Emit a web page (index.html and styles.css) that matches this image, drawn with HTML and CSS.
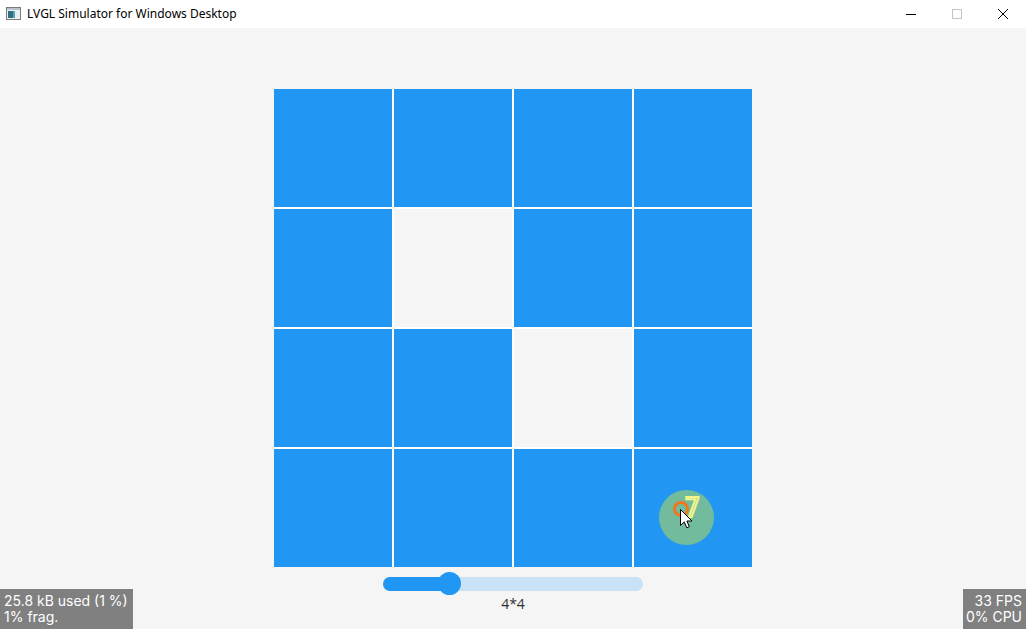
FILE: index.html
```html
<!DOCTYPE html>
<html>
<head>
<meta charset="utf-8">
<link rel="stylesheet" href="styles.css">
</head>
<body>
<div class="window">
  <div class="titlebar">
    <svg class="app-icon" width="15" height="13" viewBox="0 0 15 13">
      <rect x="0.5" y="0.5" width="14" height="12" fill="#f0f0f0" stroke="#7a7a7a"/>
      <rect x="1" y="1" width="13" height="2" fill="#b8c4cc"/>
      <rect x="2" y="4" width="5" height="7" fill="#2e6f86"/>
      <rect x="7" y="4" width="2" height="7" fill="#5aa0a8"/>
      <rect x="9" y="4" width="4" height="7" fill="#e6eef2"/>
    </svg>
    <span class="title">LVGL Simulator for Windows Desktop</span>
    <div class="controls">
      <div class="ctl">
        <svg width="12" height="12" viewBox="0 0 12 12"><path d="M1 6.5H11" stroke="#000" stroke-width="1"/></svg>
      </div>
      <div class="ctl">
        <svg width="12" height="12" viewBox="0 0 12 12"><rect x="1.5" y="1.5" width="9" height="9" fill="none" stroke="#c4c4c4"/></svg>
      </div>
      <div class="ctl">
        <svg width="12" height="12" viewBox="0 0 12 12"><path d="M1 1L11 11M11 1L1 11" stroke="#000" stroke-width="1"/></svg>
      </div>
    </div>
  </div>
  <div class="screen">
    <div class="grid">
      <div class="cell on"></div><div class="cell on"></div><div class="cell on"></div><div class="cell on"></div>
      <div class="cell on"></div><div class="cell"></div><div class="cell on"></div><div class="cell on"></div>
      <div class="cell on"></div><div class="cell on"></div><div class="cell"></div><div class="cell on"></div>
      <div class="cell on"></div><div class="cell on"></div><div class="cell on"></div><div class="cell on"></div>
    </div>
    <div class="slider">
      <div class="track"><div class="indicator" style="width:66px"></div><div class="knob" style="left:55px"></div></div>
    </div>
    <div class="size-label">4*4</div>
    <div class="stat stat-left">25.8 kB used (1 %)<br>1% frag.</div>
    <div class="stat stat-right">33 FPS<br>0% CPU</div>
    <div class="touch">
      <div class="touch-circle"></div>
      <div class="touch-ring"></div>
      <div class="touch-num">7</div>
      <svg class="cursor" width="13" height="20" viewBox="0 0 13 20">
        <path d="M0.5 0.5V16.5L4.3 12.9L6.8 18.8L9.3 17.7L6.9 12H12L0.5 0.5Z" fill="#fff" stroke="#000" stroke-width="1" stroke-linejoin="round"/>
      </svg>
    </div>
  </div>
</div>
</body>
</html>
```
FILE: styles.css
```css
html, body {
  margin: 0;
  padding: 0;
  width: 1026px;
  height: 629px;
  overflow: hidden;
}
.window {
  width: 1026px;
  height: 629px;
  display: flex;
  flex-direction: column;
  background: #fff;
}
.titlebar {
  height: 28px;
  flex: none;
  display: flex;
  align-items: center;
  background: #fff;
  font-family: "Noto Sans", "Liberation Sans", sans-serif;
  font-size: 12px;
  color: #000;
}
.app-icon {
  margin-left: 6px;
  margin-top: -1px;
}
.title {
  margin-left: 6px;
  margin-top: -1px;
}
.controls {
  margin-left: auto;
  display: flex;
  height: 28px;
}
.ctl {
  width: 46px;
  display: flex;
  align-items: center;
  justify-content: center;
  margin-top: -1px;
}
.screen {
  position: relative;
  flex: 1;
  background: #f5f5f5;
  display: flex;
  flex-direction: column;
  align-items: center;
  padding-top: 61px;
  font-family: "Inter", "Open Sans", sans-serif;
}
.grid {
  width: 478px;
  height: 478px;
  display: grid;
  grid-template-columns: repeat(4, 118px);
  grid-template-rows: repeat(4, 118px);
  gap: 2px;
  background: #fff;
}
.cell {
  background: #f5f5f5;
}
.cell.on {
  background: #2196f3;
}
.slider {
  margin-top: 10px;
  width: 260px;
  height: 14px;
}
.track {
  position: relative;
  width: 260px;
  height: 14px;
  border-radius: 7px;
  background: #c9e2f6;
}
.indicator {
  height: 14px;
  border-radius: 7px;
  background: #2196f3;
}
.knob {
  position: absolute;
  top: -5px;
  width: 23px;
  height: 23px;
  border-radius: 50%;
  background: #2196f3;
}
.size-label {
  margin-top: 5px;
  font-family: "Open Sans", "Inter", sans-serif;
  font-size: 14px;
  color: #303030;
  line-height: 16px;
}
.stat {
  position: absolute;
  bottom: 0;
  background: #808080;
  color: #fff;
  font-size: 14px;
  line-height: 16px;
  padding: 4px 4px 4px 4px;
  height: 32px;
}
.stat-left {
  left: 0;
  width: 125px;
}
.stat-right {
  right: 0;
  text-align: right;
  padding-left: 3px;
  padding-right: 4px;
}
.touch {
  position: absolute;
  left: 658px;
  top: 462px;
  width: 56px;
  height: 56px;
}
.touch-circle {
  position: absolute;
  left: 1px;
  top: 0;
  width: 55px;
  height: 55px;
  border-radius: 50%;
  background: #72bb9d;
}
.touch-ring {
  position: absolute;
  left: 15px;
  top: 11px;
  width: 10px;
  height: 10px;
  border: 3px solid #f2771c;
  border-radius: 50%;
}
.touch-num {
  position: absolute;
  left: 26px;
  top: 3px;
  font-family: "DejaVu Sans", sans-serif;
  font-size: 26px;
  line-height: 30px;
  color: transparent;
  -webkit-text-stroke: 2px #f6f58c;
}
.cursor {
  position: absolute;
  left: 22px;
  top: 19px;
}
```
